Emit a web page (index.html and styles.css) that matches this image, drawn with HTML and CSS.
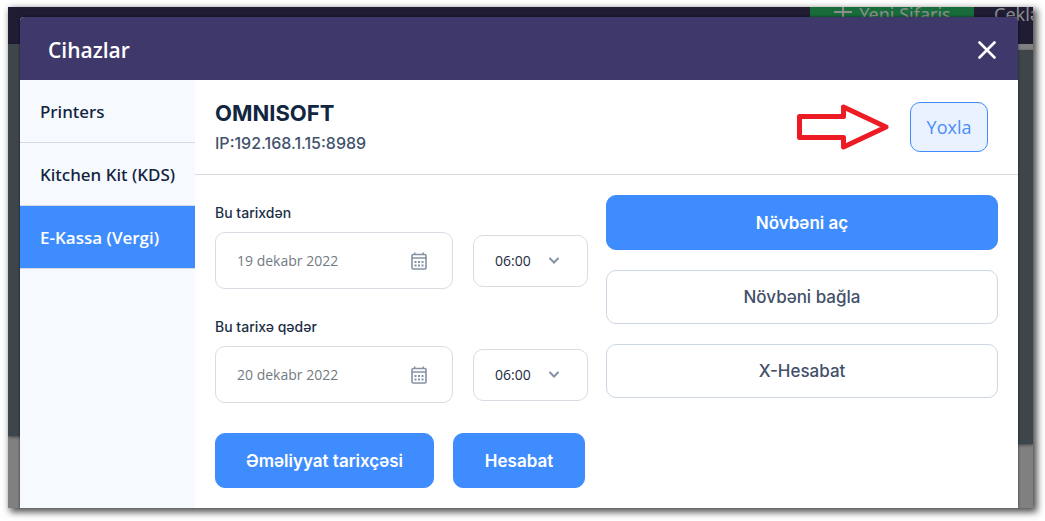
FILE: index.html
```html
<!DOCTYPE html>
<html lang="az">
<head>
<meta charset="utf-8">
<title>Cihazlar</title>
<link rel="stylesheet" href="styles.css">
</head>
<body>
<div class="frame">
  <div class="backdrop" aria-hidden="true">
    <div class="topbar">
      <span class="new-order"><svg width="20" height="20" viewBox="0 0 20 20"><path d="M10 1v18M1 10h18" stroke="currentColor" stroke-width="2"/></svg>Yeni Sifariş</span>
      <span class="checks">Çeklər</span>
    </div>
    <div class="desk">
      <div class="panel panel-left"></div>
      <div class="panel panel-right"></div>
    </div>
  </div>

  <section class="modal" role="dialog" aria-labelledby="modal-title">
    <header class="modal-header">
      <h1 class="modal-title" id="modal-title">Cihazlar</h1>
      <button class="close" type="button" aria-label="Bağla">
        <svg width="18" height="18" viewBox="0 0 18 18"><path d="M1.500 1.500l15 15M16.500 1.500l-15 15" stroke="currentColor" stroke-width="2.600" stroke-linecap="round"/></svg>
      </button>
    </header>
    <div class="modal-body">
      <nav class="sidebar">
        <a class="tab" href="#printers">Printers</a>
        <a class="tab" href="#kds">Kitchen Kit (KDS)</a>
        <a class="tab tab-active" href="#ekassa" aria-current="page">E-Kassa (Vergi)</a>
      </nav>
      <main class="content">
        <div class="device">
          <div class="device-info">
            <h2 class="device-name">OMNISOFT</h2>
            <p class="device-ip">IP:192.168.1.15:8989</p>
          </div>
          <svg class="arrow" width="93" height="46" viewBox="0 0 93 46" aria-hidden="true"><path d="M2.500 12.500H46.500V3L89 23 46.500 43V33.500H2.500Z" fill="#fff" stroke="#ed1c24" stroke-width="5" stroke-linejoin="round"/></svg>
          <button class="check" type="button">Yoxla</button>
        </div>
        <div class="columns">
          <form class="report">
            <div class="period">
              <label class="label" for="from-date">Bu tarixdən</label>
              <div class="fields">
                <div class="date">
                  <input class="date-input" id="from-date" type="text" value="19 dekabr 2022">
                  <svg class="calendar" width="16" height="18" viewBox="0 0 16 18"><path d="M3 0.500h1.500V3H3zM11.500 0.500H13V3h-1.500z" fill="currentColor"/><rect x="1" y="2.500" width="14" height="14.500" rx="1.200" fill="none" stroke="currentColor" stroke-width="1.600"/><path d="M1 6h14" stroke="currentColor" stroke-width="1.500"/><path d="M3.500 10h9M3.500 13.500h9" stroke="currentColor" stroke-width="1.800" stroke-dasharray="2 1.500"/></svg>
                </div>
                <div class="time">
                  <select class="time-select" aria-label="Başlanğıc saatı"><option>06:00</option></select>
                  <svg class="chevron" width="10" height="7" viewBox="0 0 10 7"><path d="M1 1.500l4 4 4-4" fill="none" stroke="currentColor" stroke-width="2" stroke-linecap="round"/></svg>
                </div>
              </div>
            </div>
            <div class="period">
              <label class="label" for="to-date">Bu tarixə qədər</label>
              <div class="fields">
                <div class="date">
                  <input class="date-input" id="to-date" type="text" value="20 dekabr 2022">
                  <svg class="calendar" width="16" height="18" viewBox="0 0 16 18"><path d="M3 0.500h1.500V3H3zM11.500 0.500H13V3h-1.500z" fill="currentColor"/><rect x="1" y="2.500" width="14" height="14.500" rx="1.200" fill="none" stroke="currentColor" stroke-width="1.600"/><path d="M1 6h14" stroke="currentColor" stroke-width="1.500"/><path d="M3.500 10h9M3.500 13.500h9" stroke="currentColor" stroke-width="1.800" stroke-dasharray="2 1.500"/></svg>
                </div>
                <div class="time">
                  <select class="time-select" aria-label="Son saat"><option>06:00</option></select>
                  <svg class="chevron" width="10" height="7" viewBox="0 0 10 7"><path d="M1 1.500l4 4 4-4" fill="none" stroke="currentColor" stroke-width="2" stroke-linecap="round"/></svg>
                </div>
              </div>
            </div>
            <div class="actions">
              <button class="button button-primary action-wide" type="button">Əməliyyat tarixçəsi</button>
              <button class="button button-primary action-narrow" type="button">Hesabat</button>
            </div>
          </form>
          <div class="shift">
            <button class="button button-primary" type="button">Növbəni aç</button>
            <button class="button button-outline" type="button">Növbəni bağla</button>
            <button class="button button-outline" type="button">X-Hesabat</button>
          </div>
        </div>
      </main>
    </div>
  </section>
</div>
</body>
</html>
```
FILE: styles.css
```css
* {
  box-sizing: border-box;
}

body {
  display: flex;
  min-height: 100vh;
  margin: 0;
  padding: 7px 12px 13px 8px;
  background: #fff;
  font-family: "Noto Sans", "Open Sans", sans-serif;
}

button,
input,
select {
  font: inherit;
  margin: 0;
}

h1,
h2,
p {
  margin: 0;
}

svg {
  display: block;
  flex: none;
}

/* Backdrop and dialog share one grid cell */
.frame {
  flex: 1;
  display: grid;
  overflow: hidden;
  background: #808080;
  box-shadow: 3px 3px 7px 1px rgba(0, 0, 0, 0.7);
}

.backdrop,
.modal {
  grid-area: 1 / 1;
  min-width: 0;
}

.backdrop {
  display: flex;
  flex-direction: column;
}

.topbar {
  display: flex;
  justify-content: flex-end;
  height: 37px;
  background: #1f1c34;
  color: #8d8d90;
  font-size: 18px;
  line-height: 14px;
}

.new-order {
  display: flex;
  justify-content: center;
  gap: 6px;
  width: 164px;
  background: #176c3a;
}

.new-order svg {
  margin-top: -5px;
}

.checks {
  width: 59px;
  padding-left: 20px;
  white-space: nowrap;
}

.desk {
  flex: 1;
  display: flex;
  justify-content: space-between;
  align-items: flex-start;
}

.panel {
  width: 40px;
  height: 392px;
  background: #3e464b;
  box-shadow: 0 1px 3px rgba(0, 0, 0, 0.5);
}

.panel-right {
  height: 394px;
  margin-top: 6px;
}

.modal {
  display: flex;
  flex-direction: column;
  margin: 10px 15px 0 12px;
  border-radius: 4px 4px 0 0;
  overflow: hidden;
  background: #fff;
  box-shadow: 0 0 3px rgba(0, 0, 0, 0.6);
}

.modal-header {
  display: flex;
  justify-content: space-between;
  align-items: center;
  height: 63px;
  padding: 2px 16px 0 28px;
  background: #3f386b;
  color: #fff;
}

.modal-title {
  font-family: "Open Sans", sans-serif;
  font-size: 21px;
  font-weight: 600;
  line-height: 30px;
}

.close {
  padding: 6px;
  border: 0;
  background: none;
  color: inherit;
}

.modal-body {
  flex: 1;
  display: flex;
}

.sidebar {
  flex: none;
  width: 175px;
  background: #f6fafe;
}

.tab {
  display: flex;
  align-items: center;
  height: 63px;
  padding-left: 20px;
  border-bottom: 1px solid #d5dae0;
  color: #12233f;
  font-size: 17px;
  font-weight: 500;
  text-decoration: none;
  white-space: nowrap;
}

.tab-active {
  background: #3f8cfe;
  color: #fff;
  font-family: "Open Sans", sans-serif;
  font-weight: 600;
}

.content {
  flex: 1;
  min-width: 0;
}

.device {
  display: flex;
  align-items: center;
  height: 95px;
  padding: 0 30px 0 20px;
  border-bottom: 1px solid #d8dce1;
}

.device-info {
  flex: 1;
  padding-top: 2px;
  font-family: Inter, sans-serif;
}

.device-name {
  color: #12263f;
  font-size: 22px;
  font-weight: 700;
  line-height: 30px;
}

.device-ip {
  color: #42536b;
  font-size: 16px;
  font-weight: 500;
  line-height: 30px;
}

.arrow {
  margin-right: 20px;
}

.check {
  width: 78px;
  height: 50px;
  padding: 0;
  border: 1px solid #3f8cfe;
  border-radius: 10px;
  background: #eaf2ff;
  color: #4a8dfb;
  font-family: "Open Sans", sans-serif;
  font-size: 18px;
}

.columns {
  display: grid;
  grid-template-columns: minmax(0, 373fr) minmax(0, 392fr);
  gap: 18px;
  padding: 20px;
}

.period {
  margin-bottom: 30px;
}

.label {
  display: block;
  height: 37px;
  color: #1d2f45;
  font-family: Inter, sans-serif;
  font-size: 14px;
  font-weight: 500;
  line-height: 36px;
}

.period + .period .label {
  height: 27px;
  line-height: 16px;
}

.fields {
  display: flex;
  align-items: center;
  gap: 20px;
}

.date,
.time {
  display: flex;
  align-items: center;
  border: 1px solid #d9dce2;
  border-radius: 10px;
  background: #fff;
}

.date {
  flex: 1;
  min-width: 0;
  height: 57px;
  padding: 0 25px 0 21px;
}

.date-input {
  flex: 1;
  min-width: 0;
  padding: 0;
  border: 0;
  background: none;
  color: #737a82;
  font-family: "Open Sans", sans-serif;
  font-size: 14px;
}

.calendar,
.chevron {
  color: #8492a3;
}

.time {
  flex: none;
  width: 115px;
  height: 52px;
  padding: 0 28px 0 21px;
  justify-content: space-between;
}

.time-select {
  appearance: none;
  padding: 0;
  border: 0;
  background: none;
  color: #1d2b3e;
  font-family: "Open Sans", sans-serif;
  font-size: 14px;
}

.actions {
  display: flex;
  gap: 19px;
}

.button {
  height: 55px;
  padding: 0;
  border: 1px solid #3f8cfe;
  border-radius: 10px;
  font-family: Inter, sans-serif;
  font-size: 17px;
  white-space: nowrap;
}

.button-primary {
  background: #3f8cfe;
  color: #fff;
  font-weight: 600;
}

.button-outline {
  height: 54px;
  border-color: #cdd6e2;
  background: #fff;
  color: #42506a;
  font-weight: 500;
}

.action-wide {
  width: 219px;
}

.action-narrow {
  width: 132px;
}

.shift {
  display: flex;
  flex-direction: column;
  gap: 20px;
}
```
